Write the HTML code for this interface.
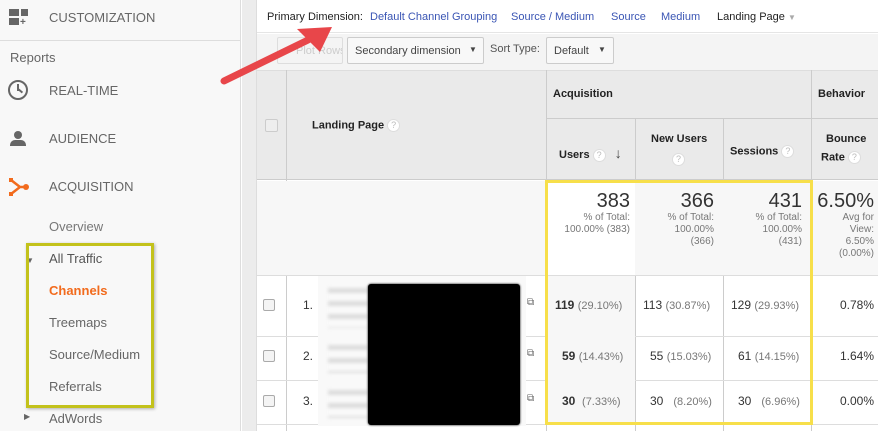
<!DOCTYPE html><html><head><meta charset="utf-8"><style>
*{margin:0;padding:0;box-sizing:border-box}
body{width:878px;height:431px;overflow:hidden;position:relative;font-family:"Liberation Sans",Arial,sans-serif;background:#fff}
.a{position:absolute;white-space:nowrap}
#side{position:absolute;left:0;top:0;width:241px;height:431px;background:#f8f8f8;border-right:1px solid #ddd}
.nav{font-size:13px;color:#666;left:49px}
.sub{font-size:13px;color:#666;left:49px}
.l{position:absolute;background:#ddd}
.h{font-weight:bold;font-size:11px;color:#222}
.q{display:inline-block;width:13px;height:13px;border:1px solid #ddd;border-radius:50%;font-size:9px;color:#bbb;text-align:center;line-height:11px;font-weight:normal;vertical-align:middle;background:#fff}
.t{text-align:right;font-size:10px;color:#777;line-height:12px}
.cb{position:absolute;width:12px;height:12px;border:1px solid #aaa;border-radius:2px;background:#f4f4f4}
.d{font-size:12px;color:#333}
.p{font-size:11px;color:#777}
.tb{font-size:11px;top:11px}
</style></head><body>
<div id="side">
<div class="a" style="left:9px;top:9px;width:10px;height:7px;background:#666"></div>
<div class="a" style="left:21px;top:9px;width:7px;height:7px;background:#666"></div>
<div class="a" style="left:9px;top:18px;width:10px;height:7px;background:#666"></div>
<div class="a" style="left:20px;top:17px;font-size:10px;color:#666;font-weight:bold">+</div>
<div class="a nav" style="top:10px">CUSTOMIZATION</div>
<div class="l" style="left:0;top:40px;width:241px;height:1px"></div>
<div class="a" style="left:10px;top:50px;font-size:13px;color:#666">Reports</div>
<div class="a" style="left:8px;top:80px;width:20px;height:20px;border:2px solid #666;border-radius:50%"></div>
<div class="a" style="left:17px;top:84px;width:2px;height:7px;background:#666"></div>
<div class="a" style="left:18px;top:90px;width:5px;height:2px;background:#666;transform:rotate(40deg)"></div>
<div class="a nav" style="top:83px">REAL-TIME</div>
<div class="a" style="left:14px;top:131px;width:8px;height:8px;border-radius:50%;background:#666"></div>
<div class="a" style="left:10px;top:140px;width:16px;height:6px;border-radius:5px 5px 0 0;background:#666"></div>
<div class="a nav" style="top:131px">AUDIENCE</div>
<svg class="a" style="left:8px;top:176px" width="22" height="22"><path d="M3 4 L12 11 L3 18 M12 11 L18 11" stroke="#f26b1d" stroke-width="2.5" fill="none"/><rect x="1" y="2" width="4" height="4" fill="#f26b1d"/><rect x="1" y="16" width="4" height="4" fill="#f26b1d"/><circle cx="18" cy="11" r="3" fill="#f26b1d"/></svg>
<div class="a nav" style="top:179px">ACQUISITION</div>
<div class="a sub" style="top:219px;color:#777">Overview</div>
<div class="a" style="left:26px;top:256px;font-size:8px;color:#666">▼</div>
<div class="a sub" style="top:251px;color:#555">All Traffic</div>
<div class="a sub" style="top:283px;color:#f26b1d;font-weight:bold">Channels</div>
<div class="a sub" style="top:315px">Treemaps</div>
<div class="a sub" style="top:347px">Source/Medium</div>
<div class="a sub" style="top:379px">Referrals</div>
<div class="a" style="left:24px;top:412px;font-size:8px;color:#666">▶</div>
<div class="a sub" style="top:411px">AdWords</div>
<div class="a" style="left:26px;top:243px;width:128px;height:165px;border:3px solid #c3c21c;box-shadow:1px 1px 3px rgba(0,0,0,.3)"></div>
</div>
<div class="a" style="left:242px;top:0;width:15px;height:431px;background:#ececec;border-right:1px solid #ddd"></div>
<div class="a" style="left:257px;top:0;width:621px;height:33px;background:#fff;border-bottom:1px solid #e5e5e5"></div>
<div class="a tb" style="left:267px;color:#222">Primary Dimension:</div>
<div class="a tb" style="left:370px;color:#3a55b4">Default Channel Grouping</div>
<div class="a tb" style="left:511px;color:#3a55b4">Source / Medium</div>
<div class="a tb" style="left:611px;color:#3a55b4">Source</div>
<div class="a tb" style="left:661px;color:#3a55b4">Medium</div>
<div class="a tb" style="left:717px;color:#222">Landing Page <span style="color:#aaa;font-size:8px">▼</span></div>
<div class="a" style="left:257px;top:34px;width:621px;height:36px;background:#f4f4f4"></div>
<div class="a" style="left:277px;top:37px;width:66px;height:27px;border:1px solid #ddd;border-radius:2px;font-size:11px;color:#ccc;padding:7px 0 0 18px;overflow:hidden">Plot Rows</div>
<div class="a" style="left:347px;top:37px;width:137px;height:27px;border:1px solid #ccc;border-radius:2px;background:#f8f8f8;font-size:11px;color:#444;padding:7px 0 0 7px">Secondary dimension</div>
<div class="a" style="left:469px;top:45px;font-size:8px;color:#444">▼</div>
<div class="a" style="left:490px;top:43px;font-size:11px;color:#555">Sort Type:</div>
<div class="a" style="left:546px;top:37px;width:68px;height:27px;border:1px solid #ccc;border-radius:2px;background:#f8f8f8;font-size:11px;color:#444;padding:7px 0 0 7px">Default</div>
<div class="a" style="left:598px;top:45px;font-size:8px;color:#444">▼</div>
<div class="a" style="left:257px;top:70px;width:621px;height:110px;background:#eaeaea;border-top:1px solid #ddd;border-bottom:1px solid #ccc"></div>
<div class="l" style="left:286px;top:70px;width:1px;height:361px;background:#ccc"></div>
<div class="l" style="left:546px;top:70px;width:1px;height:361px;background:#ccc"></div>
<div class="l" style="left:635px;top:118px;width:1px;height:313px;background:#ccc"></div>
<div class="l" style="left:723px;top:118px;width:1px;height:313px;background:#ccc"></div>
<div class="l" style="left:811px;top:70px;width:1px;height:361px;background:#ccc"></div>
<div class="l" style="left:546px;top:118px;width:332px;height:1px;background:#ccc"></div>
<div class="cb" style="left:265px;top:119px;width:13px;height:13px;border-color:#ccc;background:#eee"></div>
<div class="a h" style="left:312px;top:119px">Landing Page <span class="q">?</span></div>
<div class="a h" style="left:553px;top:88px">Acquisition</div>
<div class="a h" style="left:818px;top:88px">Behavior</div>
<div class="a h" style="left:559px;top:145px">Users <span class="q">?</span> <span style="font-size:14px;color:#444;margin-left:6px">↓</span></div>
<div class="a h" style="left:651px;top:133px">New Users</div>
<div class="a" style="left:672px;top:151px"><span class="q">?</span></div>
<div class="a h" style="left:730px;top:145px">Sessions <span class="q">?</span></div>
<div class="a h" style="left:826px;top:133px">Bounce</div>
<div class="a h" style="left:821px;top:151px">Rate <span class="q">?</span></div>
<div class="a" style="left:257px;top:181px;width:621px;height:94px;background:#f7f7f7"></div>
<div class="a" style="left:547px;top:181px;width:88px;height:94px;background:#fff"></div>
<div class="a" style="left:547px;top:190px;width:83px"><div class="t" style="font-size:20px;color:#333;line-height:22px">383</div><div class="t">% of Total:<br>100.00% (383)</div></div>
<div class="a" style="left:636px;top:190px;width:78px"><div class="t" style="font-size:20px;color:#333;line-height:22px">366</div><div class="t">% of Total:<br>100.00%<br>(366)</div></div>
<div class="a" style="left:724px;top:190px;width:78px"><div class="t" style="font-size:20px;color:#333;line-height:22px">431</div><div class="t">% of Total:<br>100.00%<br>(431)</div></div>
<div class="a" style="left:812px;top:190px;width:62px"><div class="t" style="font-size:20px;color:#333;line-height:22px">6.50%</div><div class="t">Avg for<br>View:<br>6.50%<br>(0.00%)</div></div>
<div class="l" style="left:257px;top:275px;width:621px;height:1px"></div>
<div class="l" style="left:257px;top:336px;width:621px;height:1px"></div>
<div class="l" style="left:257px;top:380px;width:621px;height:1px"></div>
<div class="l" style="left:257px;top:424px;width:621px;height:1px"></div>
<div class="a" style="left:547px;top:276px;width:88px;height:148px;background:#f7f7f7"></div>
<div class="a" style="left:318px;top:276px;width:208px;height:150px;background:#f9f9f9"></div>
<div class="a" style="left:328px;top:288px;width:40px;height:40px;background:repeating-linear-gradient(#ddd 0 5px,#f9f9f9 5px 13px);filter:blur(1.5px)"></div>
<div class="a" style="left:328px;top:345px;width:40px;height:28px;background:repeating-linear-gradient(#ddd 0 5px,#f9f9f9 5px 13px);filter:blur(1.5px)"></div>
<div class="a" style="left:328px;top:390px;width:40px;height:28px;background:repeating-linear-gradient(#ddd 0 5px,#f9f9f9 5px 13px);filter:blur(1.5px)"></div>
<div class="a" style="left:368px;top:284px;width:152px;height:141px;background:#000;border-radius:3px;box-shadow:0 0 2px #000"></div>
<div class="cb" style="left:263px;top:299px"></div><div class="a d" style="left:303px;top:298px">1.</div>
<div class="cb" style="left:263px;top:350px"></div><div class="a d" style="left:303px;top:349px">2.</div>
<div class="cb" style="left:263px;top:395px"></div><div class="a d" style="left:303px;top:394px">3.</div>
<div class="a" style="left:527px;top:297px;font-size:10px;color:#666">⧉</div>
<div class="a" style="left:527px;top:348px;font-size:10px;color:#666">⧉</div>
<div class="a" style="left:527px;top:393px;font-size:10px;color:#666">⧉</div>
<div class="a d" style="left:555px;top:298px"><b>119</b> <span class="p">(29.10%)</span></div>
<div class="a d" style="left:643px;top:298px">113 <span class="p">(30.87%)</span></div>
<div class="a d" style="left:731px;top:298px">129 <span class="p">(29.93%)</span></div>
<div class="a d" style="left:840px;top:298px">0.78%</div>
<div class="a d" style="left:562px;top:349px"><b>59</b> <span class="p">(14.43%)</span></div>
<div class="a d" style="left:650px;top:349px">55 <span class="p">(15.03%)</span></div>
<div class="a d" style="left:738px;top:349px">61 <span class="p">(14.15%)</span></div>
<div class="a d" style="left:840px;top:349px">1.64%</div>
<div class="a d" style="left:562px;top:394px"><b>30</b> &nbsp;<span class="p">(7.33%)</span></div>
<div class="a d" style="left:650px;top:394px">30 &nbsp;&nbsp;<span class="p">(8.20%)</span></div>
<div class="a d" style="left:738px;top:394px">30 &nbsp;&nbsp;<span class="p">(6.96%)</span></div>
<div class="a d" style="left:840px;top:394px">0.00%</div>
<div class="a" style="left:545px;top:180px;width:268px;height:245px;border:3px solid #f7df4a"></div>
<svg class="a" style="left:0;top:0" width="878" height="431"><line x1="224" y1="81" x2="308" y2="40" stroke="#e8464a" stroke-width="7" stroke-linecap="round"/><polygon points="297,29 332,27 320,52" fill="#e8464a"/></svg>
</body></html>
